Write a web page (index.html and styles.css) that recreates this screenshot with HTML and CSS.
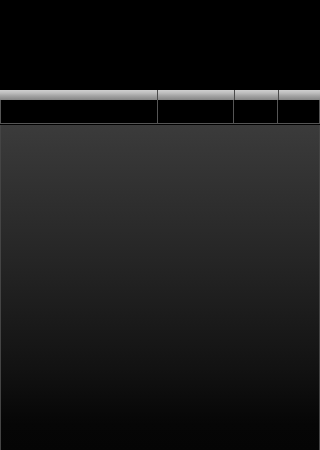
FILE: index.html
```html
<!DOCTYPE html>
<html>
<head>
<meta charset="utf-8">
<link rel="stylesheet" href="styles.css">
</head>
<body>
<div class="page">
  <div class="top"></div>
  <div class="grid">
    <div class="head-row">
      <div class="hcell c1"></div>
      <div class="hcell c2"></div>
      <div class="hcell c3"></div>
      <div class="hcell c4"></div>
    </div>
    <div class="data-row">
      <div class="dcell c1"></div>
      <div class="dcell c2"></div>
      <div class="dcell c3"></div>
      <div class="dcell c4"></div>
    </div>
  </div>
  <div class="body-area"></div>
</div>
</body>
</html>
```
FILE: styles.css
```css
html, body {
  margin: 0;
  padding: 0;
  background: #000;
  font-family: "Liberation Sans", Arial, sans-serif;
}
.page {
  width: 100%;
  height: 100vh;
  min-height: 450px;
  display: flex;
  flex-direction: column;
  overflow: hidden;
}
.top {
  height: 90px;
  flex: none;
}
.grid {
  flex: none;
  display: flex;
  flex-direction: column;
}
.head-row {
  display: flex;
  height: 10px;
  background: linear-gradient(#cfcfcf 0%, #bdbdbd 30%, #a2a2a2 60%, #858585 100%);
}
.hcell {
  box-sizing: border-box;
  border-right: 1px solid #4a4a4a;
}
.data-row {
  display: flex;
  height: 24px;
  box-sizing: border-box;
  border-left: 1px solid #555;
  border-right: 1px solid #555;
  border-bottom: 1px solid #555;
  background: #000;
}
.dcell {
  box-sizing: border-box;
  border-right: 1px solid #555;
}
.c1 { width: 49.43%; }
.c2 { width: 23.95%; }
.c3 { width: 13.69%; }
.c4 { flex: 1; border-right: none; }
.body-area {
  flex: 1;
  margin-top: 1px;
  border-left: 1px solid #444;
  border-right: 1px solid #444;
  background: linear-gradient(#3b3b3b 0%, #262626 40%, #121212 75%, #060606 92%, #050505 100%);
}
```
